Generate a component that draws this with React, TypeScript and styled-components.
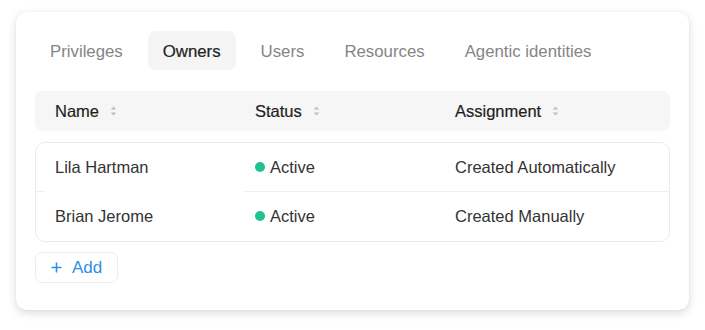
import React from 'react'
import styled, { createGlobalStyle } from 'styled-components'

const GlobalStyle = createGlobalStyle`
  html, body {
    margin: 0;
    padding: 0;
    background: #ffffff;
    font-family: 'Liberation Sans', Arial, sans-serif;
  }
`

const Page = styled.div`
  padding: 12px 16px 20px 16px;
`

const Card = styled.div`
  width: 673px;
  height: 298px;
  box-sizing: border-box;
  background: #fff;
  border-radius: 10px;
  box-shadow: 0 3px 10px rgba(0, 0, 0, 0.14), 0 0 1px rgba(0, 0, 0, 0.12);
  padding: 19px 19px 0 19px;
  display: flex;
  flex-direction: column;
`

const Tabs = styled.div`
  display: flex;
  gap: 10px;
  height: 39px;
`

const Tab = styled.div<{ $active?: boolean }>`
  display: flex;
  align-items: center;
  padding: 2px 15px 0 15px;
  border-radius: 8px;
  font-size: 16.8px;
  color: ${(p) => (p.$active ? '#222' : '#858585')};
  background: ${(p) => (p.$active ? '#f5f5f5' : 'transparent')};
  ${(p) => (p.$active ? '-webkit-text-stroke: 0.2px #222;' : '')}
`

const HeaderRow = styled.div`
  margin-top: 21px;
  height: 39px;
  display: grid;
  grid-template-columns: 200px 200px 1fr;
  background: #f6f6f6;
  border-radius: 8px;
  box-shadow: 0 1px 2px rgba(0, 0, 0, 0.04);
`

const HeaderCell = styled.div`
  display: flex;
  align-items: center;
  gap: 11px;
  padding: 1px 0 0 20px;
  font-size: 16.5px;
  color: #1e1e1e;
  -webkit-text-stroke: 0.2px #1e1e1e;
`

const Body = styled.div`
  margin-top: 12px;
  border: 1px solid #ebebeb;
  border-radius: 10px;
  display: flex;
  flex-direction: column;
`

const Row = styled.div`
  height: 49px;
  display: grid;
  grid-template-columns: 200px 200px 1fr;
`

const Cell = styled.div<{ $divider?: 'none' | 'stub' | 'inset' | 'full' }>`
  position: relative;
  display: flex;
  align-items: center;
  gap: 5px;
  padding: 0 0 1px 19px;
  font-size: 16.5px;
  color: #333;

  &::after {
    content: '';
    position: absolute;
    bottom: 0;
    height: 1px;
    background: #efefef;
    display: ${(p) => (!p.$divider || p.$divider === 'none' ? 'none' : 'block')};
    left: ${(p) => (p.$divider === 'inset' ? '8px' : '0')};
    width: ${(p) => (p.$divider === 'stub' ? '9px' : 'auto')};
    right: ${(p) => (p.$divider === 'stub' ? 'auto' : '0')};
  }
`

const Dot = styled.span`
  width: 10px;
  height: 10px;
  border-radius: 50%;
  background: #1fc48d;
  flex-shrink: 0;
`

const AddButton = styled.button`
  margin-top: 10px;
  align-self: flex-start;
  height: 31px;
  display: flex;
  align-items: center;
  gap: 10px;
  padding: 0 15px;
  background: #fff;
  border: 1px solid #ececec;
  border-radius: 7px;
  font-family: inherit;
  font-size: 17px;
  color: #2f8de4;
  cursor: pointer;
`

const SortIcon = () => (
  <svg width="7" height="12" viewBox="0 0 7 12">
    <path d="M3.5 1.5 L6.2 4.6 H0.8 Z" fill="#bdbdbd" />
    <path d="M3.5 10.5 L6.2 7.4 H0.8 Z" fill="#bdbdbd" />
  </svg>
)

const PlusIcon = () => (
  <svg width="11" height="11" viewBox="0 0 11 11">
    <path d="M5.5 0.5 V10.5 M0.5 5.5 H10.5" stroke="#2f8de4" strokeWidth="1.6" />
  </svg>
)

const tabs = ['Privileges', 'Owners', 'Users', 'Resources', 'Agentic identities']

const owners = [
  { name: 'Lila Hartman', status: 'Active', assignment: 'Created Automatically' },
  { name: 'Brian Jerome', status: 'Active', assignment: 'Created Manually' },
]

export default function App() {
  return (
    <Page>
      <GlobalStyle />
      <Card>
        <Tabs>
          {tabs.map((t) => (
            <Tab key={t} $active={t === 'Owners'}>
              {t}
            </Tab>
          ))}
        </Tabs>
        <HeaderRow>
          {['Name', 'Status', 'Assignment'].map((h) => (
            <HeaderCell key={h}>
              {h}
              <SortIcon />
            </HeaderCell>
          ))}
        </HeaderRow>
        <Body>
          {owners.map((o, i) => {
            const last = i === owners.length - 1
            return (
              <Row key={o.name}>
                <Cell $divider={last ? 'none' : 'stub'}>{o.name}</Cell>
                <Cell $divider={last ? 'none' : 'inset'}>
                  <Dot />
                  {o.status}
                </Cell>
                <Cell $divider={last ? 'none' : 'full'}>{o.assignment}</Cell>
              </Row>
            )
          })}
        </Body>
        <AddButton>
          <PlusIcon />
          Add
        </AddButton>
      </Card>
    </Page>
  )
}
